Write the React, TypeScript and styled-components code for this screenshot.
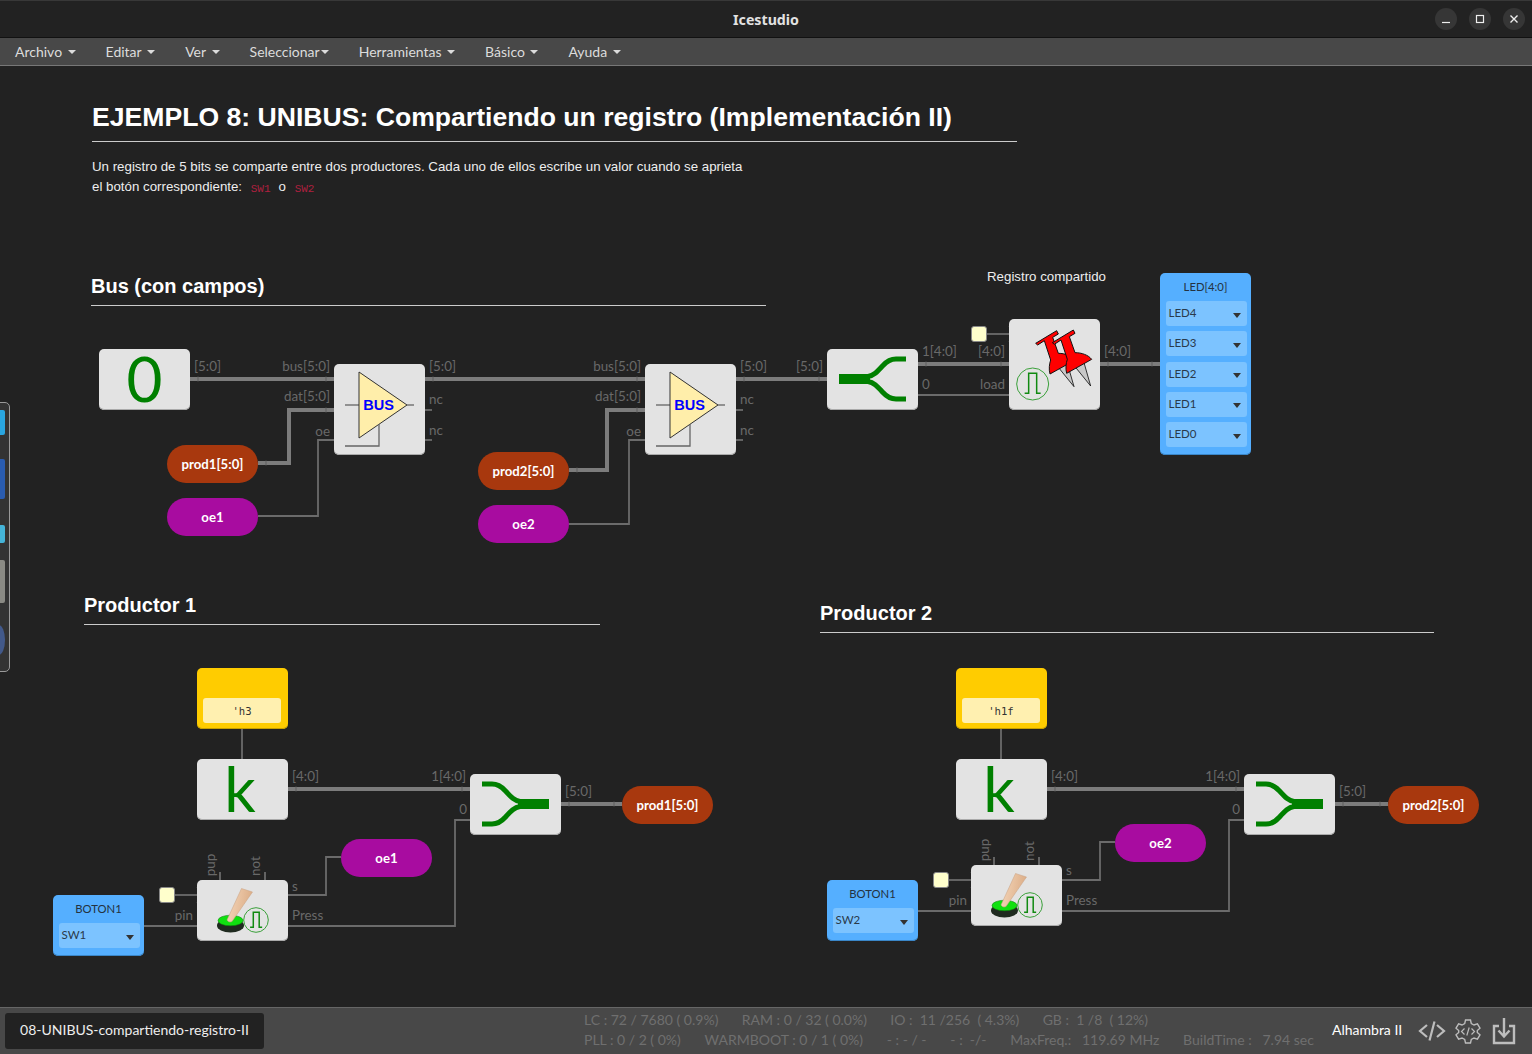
import React from "react";
import styled, { createGlobalStyle } from "styled-components";

const Global = createGlobalStyle`
  html, body { margin: 0; padding: 0; background: #222; }
  body { font-family: Lato, "Liberation Sans", sans-serif; overflow: hidden; }
  #root { width: 1532px; height: 1054px; }
`;

const Shell = styled.div`
  width: 1532px; height: 1054px; display: flex; flex-direction: column; background: #222; color: #ddd;
`;
const TitleBar = styled.header`
  height: 36px; flex: none; display: flex; align-items: center; justify-content: flex-end; gap: 12px;
  padding: 0 7px 0 0; background: #222; border-top: 1px solid #383838; border-bottom: 1px solid #111; position: relative;
`;
const AppTitle = styled.div`
  position: absolute; left: 0; right: 0; top: 0; bottom: 0; display: flex; align-items: center; justify-content: center;
  font: 700 14.2px "Noto Sans", sans-serif; color: #e2e2e2; padding-top: 1px;
`;
const WinButton = styled.button`
  width: 22px; height: 22px; border: 0; border-radius: 50%; background: #363636; padding: 0;
  display: flex; align-items: center; justify-content: center; position: relative;
`;
const MenuBar = styled.nav`
  height: 27px; flex: none; display: flex; align-items: center; background: #484848; border-bottom: 1px solid #777;
`;
const MenuItem = styled.div`
  padding: 0 15px; font-size: 14px; color: #dcdcdc; display: flex; align-items: center; white-space: nowrap;
`;
const Caret = styled.span<{ $tight?: boolean }>`
  width: 0; height: 0; margin-left: ${(p) => (p.$tight ? "1px" : "5.5px")}; margin-top: 1px;
  border-top: 4px solid #dcdcdc; border-left: 4px solid transparent; border-right: 4px solid transparent;
`;
const Canvas = styled.main`
  flex: 1; position: relative; overflow: hidden; background: #222;
`;
const WireLayer = styled.svg`
  position: absolute; left: 0; top: 0; width: 1532px; height: 941px;
`;
const Heading = styled.div<{ $x: number; $y: number; $w: number; $size: number }>`
  position: absolute; left: ${(p) => p.$x}px; top: ${(p) => p.$y - 66}px; width: ${(p) => p.$w}px;
  font: 700 ${(p) => p.$size}px/1 "Liberation Sans", sans-serif; color: #fff; white-space: nowrap;
  padding-bottom: ${(p) => (p.$size > 24 ? 10 : 9)}px; border-bottom: 1px solid #ccc;
`;
const Para = styled.div`
  position: absolute; left: 92px; top: 91px; font: 13.3px/20px "Liberation Sans", sans-serif; color: #eee; white-space: nowrap;
`;
const Code = styled.code`
  font: 11px "Liberation Mono", monospace; color: #b0203f; margin: 0 8px 0 5px; vertical-align: -1px;
`;
const Caption = styled.div`
  position: absolute; left: 987px; top: 203px; font: 13.3px/16px "Liberation Sans", sans-serif; color: #eee;
`;
const Placed = styled.div<{ $x: number; $y: number; $w?: number; $h?: number }>`
  position: absolute; left: ${(p) => p.$x}px; top: ${(p) => p.$y - 66}px;
  width: ${(p) => p.$w ?? 91}px; height: ${(p) => p.$h ?? 61}px;
`;
const GrayBlock = styled(Placed)`
  background: #e3e3e3; border-radius: 5px; box-shadow: inset 0 -1px 0 #aaa; display: flex; align-items: center; justify-content: center;
`;
const BigLetter = styled.span<{ $nudge?: number }>`
  font: 400 62px/61px Lato, sans-serif; color: #008000; margin: -2px 0 0 ${(p) => p.$nudge ?? 0}px;
`;
const BlockSvg = styled.svg`
  display: block; width: 100%; height: 100%;
`;
const BusText = styled.text`
  font: 700 14.5px "Liberation Sans", sans-serif; fill: #0000ff;
`;
const Pill = styled(Placed)<{ $color: string }>`
  height: 38px; border-radius: 19px; background: ${(p) => p.$color}; color: #fff; box-sizing: border-box; padding-bottom: 1px;
  display: flex; align-items: center; justify-content: center; font: 700 13.2px Lato, sans-serif;
`;
const ConstBlock = styled(Placed)`
  background: #ffcc00; border-radius: 5px; padding: 30px 7px 6px 6px; box-sizing: border-box; box-shadow: inset 0 -1px 0 #c8a000;
`;
const ConstValue = styled.div`
  height: 25px; background: #fff0b0; border-radius: 3px; display: flex; align-items: center; justify-content: center; padding-top: 1px; box-sizing: border-box;
  font: 10.6px "DejaVu Sans Mono", monospace; color: #333;
`;
const PinPanel = styled(Placed)`
  background: #55afff; border-radius: 5px; box-sizing: border-box; padding: 0 4px 0 6px; display: flex; flex-direction: column;
  box-shadow: inset 0 -1px 0 #3a86c8;
`;
const PinTitle = styled.div<{ $h: number }>`
  height: ${(p) => p.$h}px; flex: none; display: flex; align-items: center; justify-content: center; box-sizing: border-box; padding: 0 2px 2px 0;
  font-size: 11.3px; color: #243240;
`;
const PinSelects = styled.div`
  display: flex; flex-direction: column; gap: 5.25px;
`;
const PinSelect = styled.div`
  height: 25px; background: #7cc3ff; border-radius: 3px; display: flex; align-items: center; justify-content: space-between;
  padding: 0 6px 2px 2.5px; box-sizing: border-box; font-size: 11.5px; color: #2a3a4a; flex: none;
`;
const SelectCaret = styled.span`
  width: 0; height: 0; margin-top: 5px; border-top: 5px solid #333; border-left: 4px solid transparent; border-right: 4px solid transparent;
`;
const Port = styled.span<{ $x: number; $y: number; $end?: boolean }>`
  position: absolute; left: ${(p) => p.$x}px; top: ${(p) => p.$y - 66}px;
  transform: translate(${(p) => (p.$end ? "-100%" : "0")}, -50%);
  font-size: 13.4px; line-height: 16px; color: #696969; white-space: nowrap;
`;
const VPort = styled.span<{ $x: number; $y: number }>`
  position: absolute; left: ${(p) => p.$x}px; top: ${(p) => p.$y - 66}px;
  transform: translate(-50%, -50%) rotate(-90deg);
  font-size: 13.4px; line-height: 16px; color: #696969;
`;
const ClockBox = styled(Placed)`
  background: #ffffcc; border: 1px solid #888; border-radius: 3px; box-sizing: border-box;
`;
const Dock = styled.aside`
  position: absolute; left: -12px; top: 336px; width: 22px; height: 270px; box-sizing: border-box;
  background: #333; border: 1px solid #999; border-radius: 5px; display: flex; flex-direction: column; align-items: flex-end; padding: 7px 4px 0 0;
`;
const DockTile = styled.div<{ $h: number; $gap: number; $color: string; $round?: boolean }>`
  width: 12px; height: ${(p) => p.$h}px; margin-bottom: ${(p) => p.$gap}px; background: ${(p) => p.$color};
  border-radius: ${(p) => (p.$round ? "50%" : "2px")};
`;
const Footer = styled.footer`
  height: 46px; flex: none; background: #484848; border-top: 1px solid #666; display: flex; align-items: center;
`;
const FileTab = styled.div`
  margin-left: 5px; width: 259px; height: 36px; flex: none; background: #222; border-radius: 3px; color: #eee; padding-bottom: 3px;
  display: flex; align-items: center; justify-content: center; font-size: 14px; box-sizing: border-box;
`;
const Stats = styled.div`
  margin: -2px 0 0 320px; width: 748px; flex: none; display: flex; flex-direction: column; color: #6f6f6f; font-size: 14px; line-height: 20px;
`;
const StatRow = styled.div<{ $gap: number }>`
  display: flex; gap: ${(p) => p.$gap}px; white-space: pre;
`;
const BoardName = styled.div`
  color: #fff; font-size: 14px; width: 86px; flex: none; margin-top: -3px; white-space: nowrap;
`;
const FooterIcons = styled.div`
  display: flex; align-items: center; gap: 9px;
`;
const FooterIcon = styled.svg`
  display: block; fill: none; stroke: #bdbdbd;
`;

type Pt = [number, number];
const wires: { pts: Pt[]; w: number }[] = [
  { pts: [[190, 379], [334, 379]], w: 4 },
  { pts: [[425, 379], [645, 379]], w: 4 },
  { pts: [[736, 379], [827, 379]], w: 4 },
  { pts: [[258, 463], [289, 463], [289, 410], [334, 410]], w: 4 },
  { pts: [[569, 470], [607, 470], [607, 410], [645, 410]], w: 4 },
  { pts: [[258, 516], [318, 516], [318, 440], [334, 440]], w: 2 },
  { pts: [[569, 524], [629, 524], [629, 440], [645, 440]], w: 2 },
  { pts: [[425, 410], [432, 410]], w: 2 },
  { pts: [[425, 440], [432, 440]], w: 2 },
  { pts: [[736, 410], [743, 410]], w: 2 },
  { pts: [[736, 440], [743, 440]], w: 2 },
  { pts: [[918, 364], [1009, 364]], w: 4 },
  { pts: [[918, 395], [1009, 395]], w: 2 },
  { pts: [[1100, 364], [1160, 364]], w: 4 },
  { pts: [[986, 334], [1009, 334]], w: 2 },
  { pts: [[288, 789], [470, 789]], w: 4 },
  { pts: [[561, 804], [622, 804]], w: 4 },
  { pts: [[242, 729], [242, 759]], w: 2 },
  { pts: [[288, 895], [326, 895], [326, 857], [341, 857]], w: 2 },
  { pts: [[288, 926], [455, 926], [455, 820], [470, 820]], w: 2 },
  { pts: [[144, 926], [197, 926]], w: 2 },
  { pts: [[175, 895], [197, 895]], w: 2 },
  { pts: [[220, 872], [220, 880]], w: 2 },
  { pts: [[265, 872], [265, 880]], w: 2 },
  { pts: [[1047, 789], [1244, 789]], w: 4 },
  { pts: [[1335, 804], [1388, 804]], w: 4 },
  { pts: [[1001, 729], [1001, 759]], w: 2 },
  { pts: [[1062, 880], [1100, 880], [1100, 842], [1115, 842]], w: 2 },
  { pts: [[1062, 911], [1229, 911], [1229, 820], [1244, 820]], w: 2 },
  { pts: [[918, 911], [971, 911]], w: 2 },
  { pts: [[948, 880], [971, 880]], w: 2 },
  { pts: [[994, 857], [994, 865]], w: 2 },
  { pts: [[1039, 857], [1039, 865]], w: 2 },
];

function tick(a: Pt, b: Pt, w: number, key: string) {
  const len = Math.hypot(b[0] - a[0], b[1] - a[1]);
  if (len < 16) return null;
  const ux = (b[0] - a[0]) / len;
  const uy = (b[1] - a[1]) / len;
  const cx = a[0] + ux * 8;
  const cy = a[1] + uy * 8;
  const h = w / 2 + 0.5;
  return <line key={key} x1={cx - uy * h} y1={cy - ux * h} x2={cx + uy * h} y2={cy + ux * h} stroke="#5e5e5e" strokeWidth="1" />;
}

const Wires = () => (
  <WireLayer viewBox="0 66 1532 941">
    {wires.map((wr, i) => (
      <g key={i}>
        <polyline points={wr.pts.map((p) => p.join(",")).join(" ")} fill="none" stroke={wr.w > 2 ? "#7c7c7c" : "#6b6b6b"} strokeWidth={wr.w > 2 ? 4 : 1.8} />
        {wr.w > 2 && tick(wr.pts[0], wr.pts[1], wr.w, "a")}
        {wr.w > 2 && tick(wr.pts[wr.pts.length - 1], wr.pts[wr.pts.length - 2], wr.w, "b")}
      </g>
    ))}
    {[[1009, 326], [197, 887], [971, 872]].map(([x, y], i) => (
      <polyline key={i} points={`${x},${y} ${x + 9},${y + 8} ${x},${y + 16}`} fill="none" stroke="#666" strokeWidth="1.5" />
    ))}
  </WireLayer>
);

const BusIcon = () => (
  <BlockSvg viewBox="0 0 91 91">
    <path d="M11 41H25M73 41H80" stroke="#777" strokeWidth="1.5" fill="none" />
    <path d="M25 8V74L73 41Z" fill="#ffeeaa" stroke="#333" strokeWidth="1" />
    <path d="M45 60V82H11" stroke="#666" strokeWidth="1.3" fill="none" />
    <BusText x="44.5" y="46" textAnchor="middle">BUS</BusText>
  </BlockSvg>
);

const SplitIcon = ({ flip }: { flip?: boolean }) => (
  <BlockSvg viewBox="0 0 91 61">
    <g transform={flip ? "translate(91,0) scale(-1,1)" : undefined}>
      <rect x="12" y="25" width="31" height="10" fill="#008000" />
      <path d="M41 27.5C47 26.5 50 23 56 16.5C60 12 64 10 69 10H79M41 32.5C47 33.5 50 37 56 43.5C60 48 64 50 69 50H79" fill="none" stroke="#008000" strokeWidth="5" />
    </g>
  </BlockSvg>
);

const Pulse = ({ cx, cy, r }: { cx: number; cy: number; r: number }) => (
  <g>
    <circle cx={cx} cy={cy} r={r} fill="none" stroke="#3aa03a" strokeWidth="1" />
    <path
      d={`M${cx - r * 0.48} ${cy + r * 0.58}H${cx - r * 0.22}V${cy - r * 0.62}H${cx + r * 0.26}V${cy + r * 0.58}H${cx + r * 0.5}`}
      fill="none"
      stroke="#118a11"
      strokeWidth="1.5"
    />
  </g>
);

const Thumbtack = ({ dx, dy }: { dx: number; dy: number }) => (
  <g transform={`translate(${dx},${dy})`}>
    <polygon points="345,170 372,158 392,228" fill="#c8c8c8" stroke="#111" strokeWidth="2.5" strokeLinejoin="round" />
    <path
      d="M277 98L340 60L345 70L328 80L345 128C365 128 385 135 395 148L320 190C316 175 318 160 322 148L303 90L283 103Z"
      fill="#f00"
      stroke="#111"
      strokeWidth="3"
      strokeLinejoin="round"
    />
  </g>
);

const RegisterIcon = () => (
  <BlockSvg viewBox="147 27 273 273">
    <Thumbtack dx={-50} dy={2} />
    <Thumbtack dx={0} dy={0} />
    <circle cx="218" cy="222" r="48" fill="none" stroke="#3aa03a" strokeWidth="3" />
    <path d="M194 250H206V190H230V250H242" fill="none" stroke="#118a11" strokeWidth="4.5" />
  </BlockSvg>
);

const ButtonIcon = ({ id }: { id: string }) => (
  <BlockSvg viewBox="0 0 91 61">
    <defs>
      <linearGradient id={id} x1="0" y1="0" x2="1" y2="0.2">
        <stop offset="0" stopColor="#f6d8bc" />
        <stop offset="1" stopColor="#dcae88" />
      </linearGradient>
    </defs>
    <ellipse cx="33.5" cy="45.5" rx="13.5" ry="7" fill="#1f2a1f" />
    <ellipse cx="33.5" cy="40.5" rx="12.5" ry="5.3" fill="#10e010" stroke="#0a7a0a" strokeWidth="0.5" />
    <path d="M30 40L44.5 8.5L55.5 12L35 41.5C33 42.5 31 42 30 40Z" fill={`url(#${id})`} stroke="#c8a080" strokeWidth="0.5" />
    <Pulse cx={59} cy={40} r={12.3} />
  </BlockSvg>
);

const Sel = ({ children }: { children: string }) => (
  <PinSelect>
    {children}
    <SelectCaret />
  </PinSelect>
);

export default function App() {
  return (
    <>
      <Global />
      <Shell>
        <TitleBar>
          <AppTitle>Icestudio</AppTitle>
          <WinButton aria-label="min">
            <svg width="10" height="10" viewBox="0 0 10 10"><path d="M1 8.5H9" stroke="#eee" strokeWidth="1.2" /></svg>
          </WinButton>
          <WinButton aria-label="max">
            <svg width="10" height="10" viewBox="0 0 10 10"><rect x="1.5" y="1.5" width="7" height="7" fill="none" stroke="#eee" strokeWidth="1.2" /></svg>
          </WinButton>
          <WinButton aria-label="close">
            <svg width="10" height="10" viewBox="0 0 10 10"><path d="M1.5 1.5L8.5 8.5M8.5 1.5L1.5 8.5" stroke="#eee" strokeWidth="1.4" /></svg>
          </WinButton>
        </TitleBar>
        <MenuBar>
          <MenuItem>Archivo<Caret /></MenuItem>
          <MenuItem>Editar<Caret /></MenuItem>
          <MenuItem>Ver<Caret /></MenuItem>
          <MenuItem>Seleccionar<Caret $tight /></MenuItem>
          <MenuItem>Herramientas<Caret /></MenuItem>
          <MenuItem>Básico<Caret /></MenuItem>
          <MenuItem>Ayuda<Caret /></MenuItem>
        </MenuBar>
        <Canvas>
          <Wires />
          <Heading $x={92} $y={104} $w={925} $size={26.6}>EJEMPLO 8: UNIBUS: Compartiendo un registro (Implementación II)</Heading>
          <Para>
            Un registro de 5 bits se comparte entre dos productores. Cada uno de ellos escribe un valor cuando se aprieta<br />
            el botón correspondiente: <Code>SW1</Code>o <Code>SW2</Code>
          </Para>
          <Heading $x={91} $y={276} $w={675} $size={20}>Bus (con campos)</Heading>
          <Heading $x={84} $y={595} $w={516} $size={20}>Productor 1</Heading>
          <Heading $x={820} $y={603} $w={614} $size={20}>Productor 2</Heading>
          <Caption>Registro compartido</Caption>

          <GrayBlock $x={99} $y={349}><BigLetter>0</BigLetter></GrayBlock>
          <GrayBlock $x={334} $y={364} $h={91}><BusIcon /></GrayBlock>
          <GrayBlock $x={645} $y={364} $h={91}><BusIcon /></GrayBlock>
          <Pill $x={167} $y={445} $color="#a8380e">prod1[5:0]</Pill>
          <Pill $x={167} $y={498} $color="#a80ca0">oe1</Pill>
          <Pill $x={478} $y={452} $color="#a8380e">prod2[5:0]</Pill>
          <Pill $x={478} $y={505} $color="#a80ca0">oe2</Pill>
          <GrayBlock $x={827} $y={349}><SplitIcon /></GrayBlock>
          <GrayBlock $x={1009} $y={319} $h={91}><RegisterIcon /></GrayBlock>
          <ClockBox $x={971} $y={326} $w={16} $h={16} />
          <PinPanel $x={1160} $y={273} $h={182}>
            <PinTitle $h={28}>LED[4:0]</PinTitle>
            <PinSelects>
              <Sel>LED4</Sel>
              <Sel>LED3</Sel>
              <Sel>LED2</Sel>
              <Sel>LED1</Sel>
              <Sel>LED0</Sel>
            </PinSelects>
          </PinPanel>

          <ConstBlock $x={197} $y={668}><ConstValue>'h3</ConstValue></ConstBlock>
          <GrayBlock $x={197} $y={759}><BigLetter $nudge={-5}>k</BigLetter></GrayBlock>
          <GrayBlock $x={470} $y={774}><SplitIcon flip /></GrayBlock>
          <Pill $x={622} $y={786} $color="#a8380e">prod1[5:0]</Pill>
          <Pill $x={341} $y={839} $color="#a80ca0">oe1</Pill>
          <GrayBlock $x={197} $y={880}><ButtonIcon id="skin1" /></GrayBlock>
          <ClockBox $x={159} $y={887} $w={16} $h={16} />
          <PinPanel $x={53} $y={895}>
            <PinTitle $h={28}>BOTON1</PinTitle>
            <Sel>SW1</Sel>
          </PinPanel>

          <ConstBlock $x={956} $y={668}><ConstValue>'h1f</ConstValue></ConstBlock>
          <GrayBlock $x={956} $y={759}><BigLetter $nudge={-5}>k</BigLetter></GrayBlock>
          <GrayBlock $x={1244} $y={774}><SplitIcon flip /></GrayBlock>
          <Pill $x={1388} $y={786} $color="#a8380e">prod2[5:0]</Pill>
          <Pill $x={1115} $y={824} $color="#a80ca0">oe2</Pill>
          <GrayBlock $x={971} $y={865}><ButtonIcon id="skin2" /></GrayBlock>
          <ClockBox $x={933} $y={872} $w={16} $h={16} />
          <PinPanel $x={827} $y={880}>
            <PinTitle $h={28}>BOTON1</PinTitle>
            <Sel>SW2</Sel>
          </PinPanel>

          <Port $x={194} $y={366}>[5:0]</Port>
          <Port $x={330} $y={366} $end>bus[5:0]</Port>
          <Port $x={330} $y={396} $end>dat[5:0]</Port>
          <Port $x={330} $y={431} $end>oe</Port>
          <Port $x={429} $y={366}>[5:0]</Port>
          <Port $x={429} $y={399}>nc</Port>
          <Port $x={429} $y={430}>nc</Port>
          <Port $x={641} $y={366} $end>bus[5:0]</Port>
          <Port $x={641} $y={396} $end>dat[5:0]</Port>
          <Port $x={641} $y={431} $end>oe</Port>
          <Port $x={740} $y={366}>[5:0]</Port>
          <Port $x={740} $y={399}>nc</Port>
          <Port $x={740} $y={430}>nc</Port>
          <Port $x={823} $y={366} $end>[5:0]</Port>
          <Port $x={922} $y={351}>1[4:0]</Port>
          <Port $x={922} $y={384}>0</Port>
          <Port $x={1005} $y={351} $end>[4:0]</Port>
          <Port $x={1005} $y={384} $end>load</Port>
          <Port $x={1104} $y={351}>[4:0]</Port>

          <Port $x={292} $y={776}>[4:0]</Port>
          <Port $x={466} $y={776} $end>1[4:0]</Port>
          <Port $x={467} $y={809} $end>0</Port>
          <Port $x={565} $y={791}>[5:0]</Port>
          <Port $x={292} $y={886}>s</Port>
          <Port $x={292} $y={915}>Press</Port>
          <Port $x={193} $y={915} $end>pin</Port>
          <VPort $x={210} $y={865}>pup</VPort>
          <VPort $x={255} $y={866}>not</VPort>

          <Port $x={1051} $y={776}>[4:0]</Port>
          <Port $x={1240} $y={776} $end>1[4:0]</Port>
          <Port $x={1240} $y={809} $end>0</Port>
          <Port $x={1339} $y={791}>[5:0]</Port>
          <Port $x={1066} $y={870}>s</Port>
          <Port $x={1066} $y={900}>Press</Port>
          <Port $x={967} $y={900} $end>pin</Port>
          <VPort $x={984} $y={850}>pup</VPort>
          <VPort $x={1029} $y={851}>not</VPort>

          <Dock>
            <DockTile $h={25} $gap={24} $color="#2aa6e0" />
            <DockTile $h={40} $gap={26} $color="#2a5cb0" />
            <DockTile $h={18} $gap={17} $color="#45b4d8" />
            <DockTile $h={43} $gap={22} $color="#8a8a84" />
            <DockTile $h={30} $gap={0} $color="#42598a" $round />
          </Dock>
        </Canvas>
        <Footer>
          <FileTab>08-UNIBUS-compartiendo-registro-II</FileTab>
          <Stats>
            <StatRow $gap={23.4}>
              <span>LC : 72 / 7680 ( 0.9%)</span>
              <span>RAM : 0 / 32 ( 0.0%)</span>
              <span>IO :  11 /256  ( 4.3%)</span>
              <span>GB :  1 /8  ( 12%)</span>
            </StatRow>
            <StatRow $gap={23.8}>
              <span>PLL : 0 / 2 ( 0%)</span>
              <span>WARMBOOT : 0 / 1 ( 0%)</span>
              <span>- : - / -</span>
              <span>- :  -/-</span>
              <span>MaxFreq.:   119.69 MHz</span>
              <span>BuildTime :   7.94 sec</span>
            </StatRow>
          </Stats>
          <BoardName>Alhambra II</BoardName>
          <FooterIcons>
            <FooterIcon width="28" height="24" viewBox="0 0 28 24" strokeWidth="2.2">
              <path d="M9 6L2 12L9 18M19 6L26 12L19 18M16.5 2.5L11.5 21.5" />
            </FooterIcon>
            <FooterIcon width="26" height="26" viewBox="0 0 26 26" strokeWidth="1.4">
              <path d="M10.5 2H15.5L16.3 5.6L19 7L22.4 5.8L25 10.2L22.3 12.6V14.4L25 16.8L22.4 21.2L19 20L16.3 21.4L15.5 25H10.5L9.7 21.4L7 20L3.6 21.2L1 16.8L3.7 14.4V12.6L1 10.2L3.6 5.8L7 7L9.7 5.6Z" />
              <path d="M9.5 10.5L6.5 13.5L9.5 16.5M16.5 10.5L19.5 13.5L16.5 16.5M14.2 9.5L11.8 17.5" strokeWidth="1.2" />
            </FooterIcon>
            <FooterIcon width="24" height="28" viewBox="0 0 24 28" strokeWidth="2.4" style={{ marginLeft: 2 }}>
              <path d="M7 9H2V26H22V9H17M12 1V19M6.5 13.5L12 19.5L17.5 13.5" />
            </FooterIcon>
          </FooterIcons>
        </Footer>
      </Shell>
    </>
  );
}
